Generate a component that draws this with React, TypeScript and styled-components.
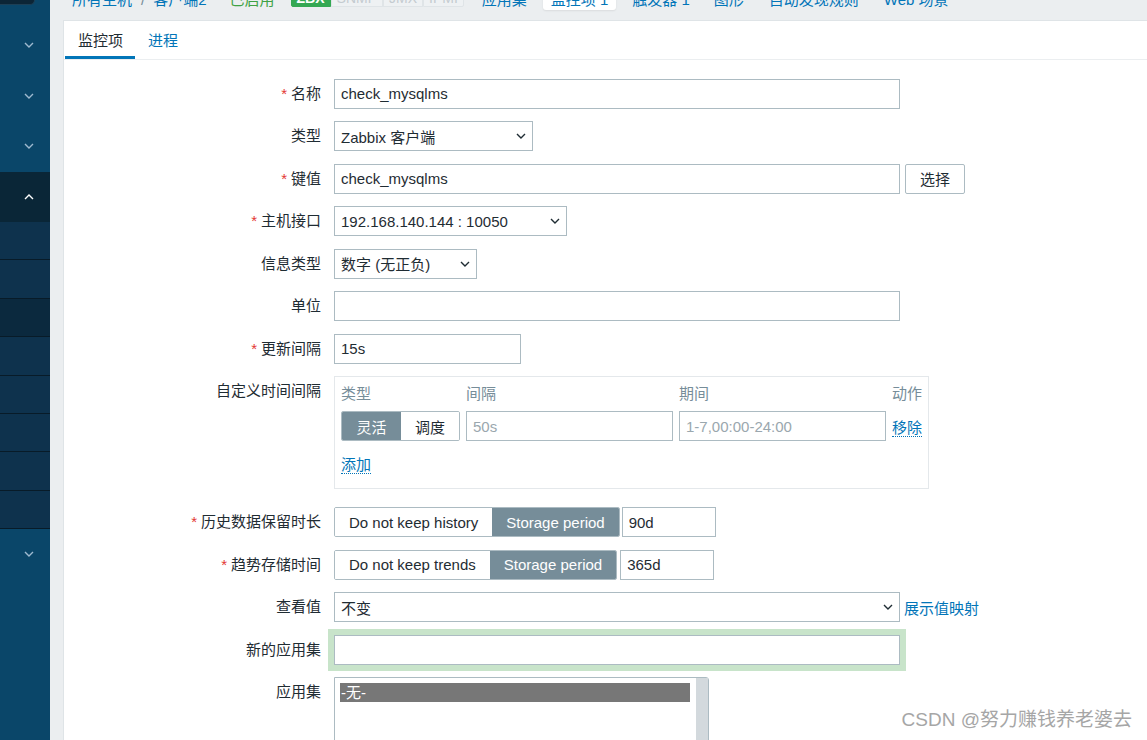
import React from "react";
import styled, { createGlobalStyle } from "styled-components";

const GlobalStyle = createGlobalStyle`
  html, body { margin: 0; padding: 0; height: 100%; overflow: hidden; }
  body {
    background: #ebeef0;
    font-family: "Liberation Sans", Arial, "Noto Sans CJK SC", sans-serif;
    font-size: 15px;
    color: #1f2c33;
  }
  * { box-sizing: border-box; }
`;

const Shell = styled.div`
  position: relative;
  display: flex;
  width: 1147px;
  height: 740px;
  overflow: hidden;
`;

/* ---------- sidebar ---------- */
const Sidebar = styled.aside`
  width: 50px;
  flex: none;
  background: #0a4669;
  display: flex;
  flex-direction: column;
`;

const SearchArea = styled.div`
  height: 20px;
  flex: none;
`;

const SearchStub = styled.div`
  width: 35px;
  height: 5px;
  background: #0c2536;
  border: 1px solid #1d3f55;
  border-top: none;
  border-left: none;
  border-radius: 0 0 5px 0;
`;

const MenuItem = styled.div<{ $active?: boolean }>`
  height: 50.5px;
  flex: none;
  display: flex;
  align-items: center;
  justify-content: center;
  padding-left: 8px;
  background: ${(p) => (p.$active ? "#0a2637" : "transparent")};
`;

const SubMenu = styled.div`
  display: flex;
  flex-direction: column;
  flex: none;
`;

const SubItem = styled.div<{ $dark?: boolean }>`
  height: 38.4px;
  background: ${(p) => (p.$dark ? "#0b293e" : "#0e324d")};
  border-bottom: 1px solid #081b28;
`;

const Chevron = ({ up, color }: { up?: boolean; color: string }) => (
  <svg width="10" height="6" viewBox="0 0 10 6">
    <path
      d={up ? "M1 5 L5 1 L9 5" : "M1 1 L5 5 L9 1"}
      fill="none"
      stroke={color}
      strokeWidth="1.4"
    />
  </svg>
);

/* ---------- main ---------- */
const Main = styled.main`
  flex: 1;
  display: flex;
  flex-direction: column;
  min-width: 0;
`;

const TopNav = styled.nav`
  height: 20px;
  flex: none;
  display: flex;
  align-items: flex-end;
  padding-left: 22px;
  overflow: hidden;
  white-space: nowrap;
`;

const NavText = styled.span<{ $ml?: number; $color?: string }>`
  margin-left: ${(p) => p.$ml ?? 0}px;
  margin-bottom: 11px;
  line-height: 18px;
  color: ${(p) => p.$color ?? "#0275b8"};
`;

const Badges = styled.div<{ $ml?: number }>`
  display: flex;
  margin-left: ${(p) => p.$ml ?? 0}px;
  margin-bottom: 13px;
`;

const Badge = styled.span<{ $on?: boolean }>`
  display: inline-block;
  height: 18px;
  line-height: 16px;
  padding: 0 5px;
  font-size: 14px;
  font-weight: ${(p) => (p.$on ? "bold" : "normal")};
  color: ${(p) => (p.$on ? "#ffffff" : "#c4cbd0")};
  background: ${(p) => (p.$on ? "#34a853" : "#eef1f3")};
  border: 1px solid ${(p) => (p.$on ? "#34a853" : "#dfe4e7")};
  border-radius: ${(p) => (p.$on ? "2px 0 0 2px" : "0")};
  &:last-child { border-radius: 0 2px 2px 0; }
`;

const NavTab = styled.span<{ $ml?: number }>`
  margin-left: ${(p) => p.$ml ?? 0}px;
  margin-bottom: 10px;
  padding: 8px 8px 1px;
  line-height: 18px;
  color: #0275b8;
  background: #ffffff;
  border-radius: 0 0 3px 3px;
  box-shadow: 0 1px 2px rgba(0, 0, 0, 0.08);
`;

const Panel = styled.section`
  flex: 1;
  margin-left: 13px;
  background: #ffffff;
  border-top: 1px solid #dfe4e7;
  border-left: 1px solid #dfe4e7;
  display: flex;
  flex-direction: column;
`;

const TabBar = styled.div`
  height: 39px;
  flex: none;
  display: flex;
  padding: 0 1px;
  border-bottom: 1px solid #ebeef0;
`;

const Tab = styled.div<{ $active?: boolean }>`
  height: 38px;
  padding: 0 12px 0 13px;
  display: flex;
  align-items: center;
  padding-top: 1px;
  border-bottom: 3px solid ${(p) => (p.$active ? "#0275b8" : "transparent")};
  color: ${(p) => (p.$active ? "#1f2c33" : "#0275b8")};
`;

const Form = styled.div`
  display: flex;
  flex-direction: column;
  gap: 12.5px;
  padding-top: 18.5px;
`;

const Row = styled.div<{ $mb?: number }>`
  display: grid;
  grid-template-columns: 257px 1fr;
  column-gap: 13px;
  align-items: start;
  margin-bottom: ${(p) => p.$mb ?? 0}px;
`;

const Label = styled.div`
  text-align: right;
  padding-top: 5px;
  line-height: 20px;
  white-space: nowrap;
  color: #1f2c33;
`;

const Req = styled.span`
  color: #e33734;
  margin-right: 4px;
`;

const Field = styled.div<{ $gap?: number }>`
  display: flex;
  align-items: center;
  gap: ${(p) => p.$gap ?? 5}px;
`;

const TextInput = styled.input<{ $w: number; $glow?: boolean }>`
  width: ${(p) => p.$w}px;
  height: 30px;
  padding: 0 6px;
  border: 1px solid #acbbc2;
  border-radius: 0;
  background: #ffffff;
  font: inherit;
  color: #1f2c33;
  outline: none;
  box-shadow: ${(p) => (p.$glow ? "0 0 0 6px #c8e4ca" : "none")};
  &::placeholder { color: #9aa7ae; }
`;

const SelectBox = styled.div<{ $w: number }>`
  width: ${(p) => p.$w}px;
  height: 30px;
  padding: 0 6px;
  border: 1px solid #acbbc2;
  background: #ffffff;
  display: flex;
  align-items: center;
  justify-content: space-between;
  white-space: nowrap;
`;

const Button = styled.button`
  height: 30px;
  padding: 0 14px;
  border: 1px solid #acbbc2;
  border-radius: 2px;
  background: #ffffff;
  font: inherit;
  color: #1f2c33;
`;

const Segmented = styled.div`
  display: inline-flex;
  height: 30px;
  border: 1px solid #acbbc2;
  border-radius: 2px;
  overflow: hidden;
  flex: none;
`;

const SegItem = styled.span<{ $active?: boolean; $w?: number }>`
  display: flex;
  align-items: center;
  justify-content: center;
  padding: 0 14px;
  ${(p) => (p.$w ? `width: ${p.$w}px;` : "")}
  white-space: nowrap;
  background: ${(p) => (p.$active ? "#768d99" : "#ffffff")};
  color: ${(p) => (p.$active ? "#ffffff" : "#1f2c33")};
`;

const IntervalBox = styled.div`
  width: 595px;
  border: 1px solid #e4e8eb;
  padding: 6px 6px 13px;
  display: grid;
  grid-template-columns: 119px 207px 207px auto;
  column-gap: 6px;
  row-gap: 6px;
  align-items: center;
`;

const ColHead = styled.div`
  line-height: 22px;
  color: #768d99;
`;

const AddRow = styled.div`
  grid-column: 1 / -1;
  margin-top: 8px;
  line-height: 20px;
`;

const Link = styled.span<{ $dotted?: boolean }>`
  color: #0275b8;
  cursor: pointer;
  ${(p) => (p.$dotted ? "border-bottom: 1px dotted #0275b8;" : "")}
`;

const ListBox = styled.div`
  width: 375px;
  height: 110px;
  border: 1px solid #acbbc2;
  border-radius: 0 3px 0 0;
  display: flex;
`;

const ListArea = styled.div`
  flex: 1;
  padding: 5px 6px 5px 5px;
`;

const ListOption = styled.div<{ $selected?: boolean }>`
  height: 19px;
  line-height: 19px;
  padding-left: 1px;
  background: ${(p) => (p.$selected ? "#777777" : "transparent")};
  color: ${(p) => (p.$selected ? "#ffffff" : "#1f2c33")};
`;

const ScrollTrack = styled.div`
  width: 12px;
  background: #d3d9dd;
`;

const Watermark = styled.div`
  position: absolute;
  right: 15px;
  bottom: 9px;
  font-size: 19px;
  color: #a6a6a6;
  text-shadow: 0 0 1px rgba(255, 255, 255, 0.8);
  white-space: nowrap;
`;

const SelectChevron = () => <Chevron color="#1f2c33" />;

export default function App() {
  return (
    <>
      <GlobalStyle />
      <Shell>
        <Sidebar>
          <SearchArea>
            <SearchStub />
          </SearchArea>
          <MenuItem><Chevron color="#9fbad0" /></MenuItem>
          <MenuItem><Chevron color="#9fbad0" /></MenuItem>
          <MenuItem><Chevron color="#9fbad0" /></MenuItem>
          <MenuItem $active><Chevron up color="#ffffff" /></MenuItem>
          <SubMenu>
            <SubItem />
            <SubItem />
            <SubItem $dark />
            <SubItem />
            <SubItem />
            <SubItem />
            <SubItem />
            <SubItem />
          </SubMenu>
          <MenuItem><Chevron color="#9fbad0" /></MenuItem>
        </Sidebar>

        <Main>
          <TopNav>
            <NavText>所有主机</NavText>
            <NavText $ml={9} $color="#768d99">/</NavText>
            <NavText $ml={8}>客户端2</NavText>
            <NavText $ml={23} $color="#3fa245">已启用</NavText>
            <Badges $ml={16}>
              <Badge $on>ZBX</Badge>
              <Badge>SNMP</Badge>
              <Badge>JMX</Badge>
              <Badge>IPMI</Badge>
            </Badges>
            <NavText $ml={18}>应用集</NavText>
            <NavTab $ml={16}>监控项 1</NavTab>
            <NavText $ml={16}>触发器 1</NavText>
            <NavText $ml={24}>图形</NavText>
            <NavText $ml={25}>自动发现规则</NavText>
            <NavText $ml={25}>Web 场景</NavText>
          </TopNav>

          <Panel>
            <TabBar>
              <Tab $active>监控项</Tab>
              <Tab>进程</Tab>
            </TabBar>

            <Form>
              <Row>
                <Label><Req>*</Req>名称</Label>
                <Field>
                  <TextInput $w={566} defaultValue="check_mysqlms" />
                </Field>
              </Row>

              <Row>
                <Label>类型</Label>
                <Field>
                  <SelectBox $w={199}>
                    <span>Zabbix 客户端</span>
                    <SelectChevron />
                  </SelectBox>
                </Field>
              </Row>

              <Row>
                <Label><Req>*</Req>键值</Label>
                <Field>
                  <TextInput $w={566} defaultValue="check_mysqlms" />
                  <Button>选择</Button>
                </Field>
              </Row>

              <Row>
                <Label><Req>*</Req>主机接口</Label>
                <Field>
                  <SelectBox $w={233}>
                    <span>192.168.140.144 : 10050</span>
                    <SelectChevron />
                  </SelectBox>
                </Field>
              </Row>

              <Row>
                <Label>信息类型</Label>
                <Field>
                  <SelectBox $w={143}>
                    <span>数字 (无正负)</span>
                    <SelectChevron />
                  </SelectBox>
                </Field>
              </Row>

              <Row>
                <Label>单位</Label>
                <Field>
                  <TextInput $w={566} defaultValue="" />
                </Field>
              </Row>

              <Row>
                <Label><Req>*</Req>更新间隔</Label>
                <Field>
                  <TextInput $w={187} defaultValue="15s" />
                </Field>
              </Row>

              <Row $mb={5.5}>
                <Label>自定义时间间隔</Label>
                <IntervalBox>
                  <ColHead>类型</ColHead>
                  <ColHead>间隔</ColHead>
                  <ColHead>期间</ColHead>
                  <ColHead>动作</ColHead>
                  <Segmented>
                    <SegItem $active $w={60}>灵活</SegItem>
                    <SegItem $w={58}>调度</SegItem>
                  </Segmented>
                  <TextInput $w={207} placeholder="50s" />
                  <TextInput $w={207} placeholder="1-7,00:00-24:00" />
                  <div><Link $dotted>移除</Link></div>
                  <AddRow><Link $dotted>添加</Link></AddRow>
                </IntervalBox>
              </Row>

              <Row>
                <Label><Req>*</Req>历史数据保留时长</Label>
                <Field $gap={2}>
                  <Segmented>
                    <SegItem>Do not keep history</SegItem>
                    <SegItem $active>Storage period</SegItem>
                  </Segmented>
                  <TextInput $w={94} defaultValue="90d" />
                </Field>
              </Row>

              <Row>
                <Label><Req>*</Req>趋势存储时间</Label>
                <Field $gap={3}>
                  <Segmented>
                    <SegItem>Do not keep trends</SegItem>
                    <SegItem $active>Storage period</SegItem>
                  </Segmented>
                  <TextInput $w={94} defaultValue="365d" />
                </Field>
              </Row>

              <Row>
                <Label>查看值</Label>
                <Field $gap={4}>
                  <SelectBox $w={566}>
                    <span>不变</span>
                    <SelectChevron />
                  </SelectBox>
                  <Link>展示值映射</Link>
                </Field>
              </Row>

              <Row>
                <Label>新的应用集</Label>
                <Field>
                  <TextInput $w={566} $glow defaultValue="" />
                </Field>
              </Row>

              <Row>
                <Label>应用集</Label>
                <Field>
                  <ListBox>
                    <ListArea>
                      <ListOption $selected>-无-</ListOption>
                    </ListArea>
                    <ScrollTrack />
                  </ListBox>
                </Field>
              </Row>
            </Form>
          </Panel>
        </Main>

        <Watermark>CSDN @努力赚钱养老婆去</Watermark>
      </Shell>
    </>
  );
}
